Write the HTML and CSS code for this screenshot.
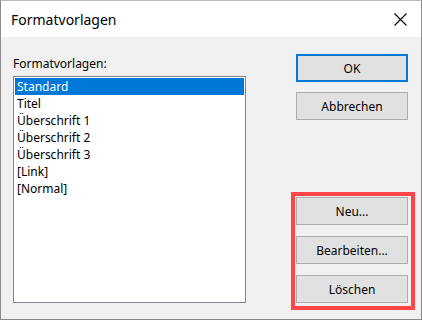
FILE: index.html
```html
<!DOCTYPE html>
<html lang="de">
<head>
    <meta charset="UTF-8">
    <title>Formatvorlagen</title>
    <link rel="stylesheet" href="styles.css">
</head>
<body>
    <div class="dialog">
        <div class="titlebar">
            <span class="title">Formatvorlagen</span>
            <svg class="close" width="13" height="13" viewBox="0 0 13 13">
                <path d="M0.5 0.5 L12.5 12.5 M12.5 0.5 L0.5 12.5" stroke="#000" stroke-width="1.1" fill="none"/>
            </svg>
        </div>

        <div class="content">
            <div class="left">
                <div class="label">Formatvorlagen:</div>
                <div class="list">
                    <div class="item selected">Standard</div>
                    <div class="item">Titel</div>
                    <div class="item">Überschrift 1</div>
                    <div class="item">Überschrift 2</div>
                    <div class="item">Überschrift 3</div>
                    <div class="item">[Link]</div>
                    <div class="item">[Normal]</div>
                </div>
            </div>

            <div class="right">
                <button class="btn default">OK</button>
                <button class="btn">Abbrechen</button>

                <div class="marked">
                    <button class="btn">Neu...</button>
                    <button class="btn">Bearbeiten...</button>
                    <button class="btn">Löschen</button>
                </div>
            </div>
        </div>
    </div>
</body>
</html>
```

FILE: styles.css
```css
body {
    margin: 0;
    padding: 0;
    font-family: "Noto Sans", "Open Sans", sans-serif;
    font-size: 12px;
    color: #000;
    background: #f0f0f0;
}
.dialog {
    width: 422px;
    height: 320px;
    box-sizing: border-box;
    border: 1px solid #8a8a8a;
    border-top-color: #b8b8b8;
    background: #f0f0f0;
    display: flex;
    flex-direction: column;
}
.titlebar {
    height: 36px;
    background: #fff;
    display: flex;
    align-items: center;
    justify-content: space-between;
    padding-left: 10px;
    padding-right: 14px;
}
.title {
    font-size: 14px;
}
.close {
    display: block;
}
.content {
    flex: 1;
    display: flex;
    padding: 17px 0 9px 12px;
}
.left {
    width: 233px;
    display: flex;
    flex-direction: column;
}
.label {
    line-height: 18px;
    padding-top: 1px;
    margin-bottom: 3px;
}
.list {
    height: 227px;
    box-sizing: border-box;
    background: #fff;
    border: 1px solid #828790;
    padding: 1px;
}
.item {
    height: 17px;
    line-height: 17px;
    padding-left: 2px;
}
.item.selected {
    background: #0078d7;
    color: #fff;
}
.right {
    margin-left: 45px;
    display: flex;
    flex-direction: column;
    align-items: flex-start;
}
.btn {
    width: 112px;
    height: 28px;
    box-sizing: border-box;
    margin: 0 0 10px 5px;
    padding: 0;
    background: #e1e1e1;
    border: 1px solid #adadad;
    font-family: inherit;
    font-size: 12px;
    color: #000;
}
.btn.default {
    border: 2px solid #0078d7;
}
.marked {
    margin-top: auto;
    border: 4px solid #ff4545;
    padding: 1px 3px 3px 1px;
    display: flex;
    flex-direction: column;
    gap: 11px;
}
.marked .btn {
    margin: 0;
}
```
